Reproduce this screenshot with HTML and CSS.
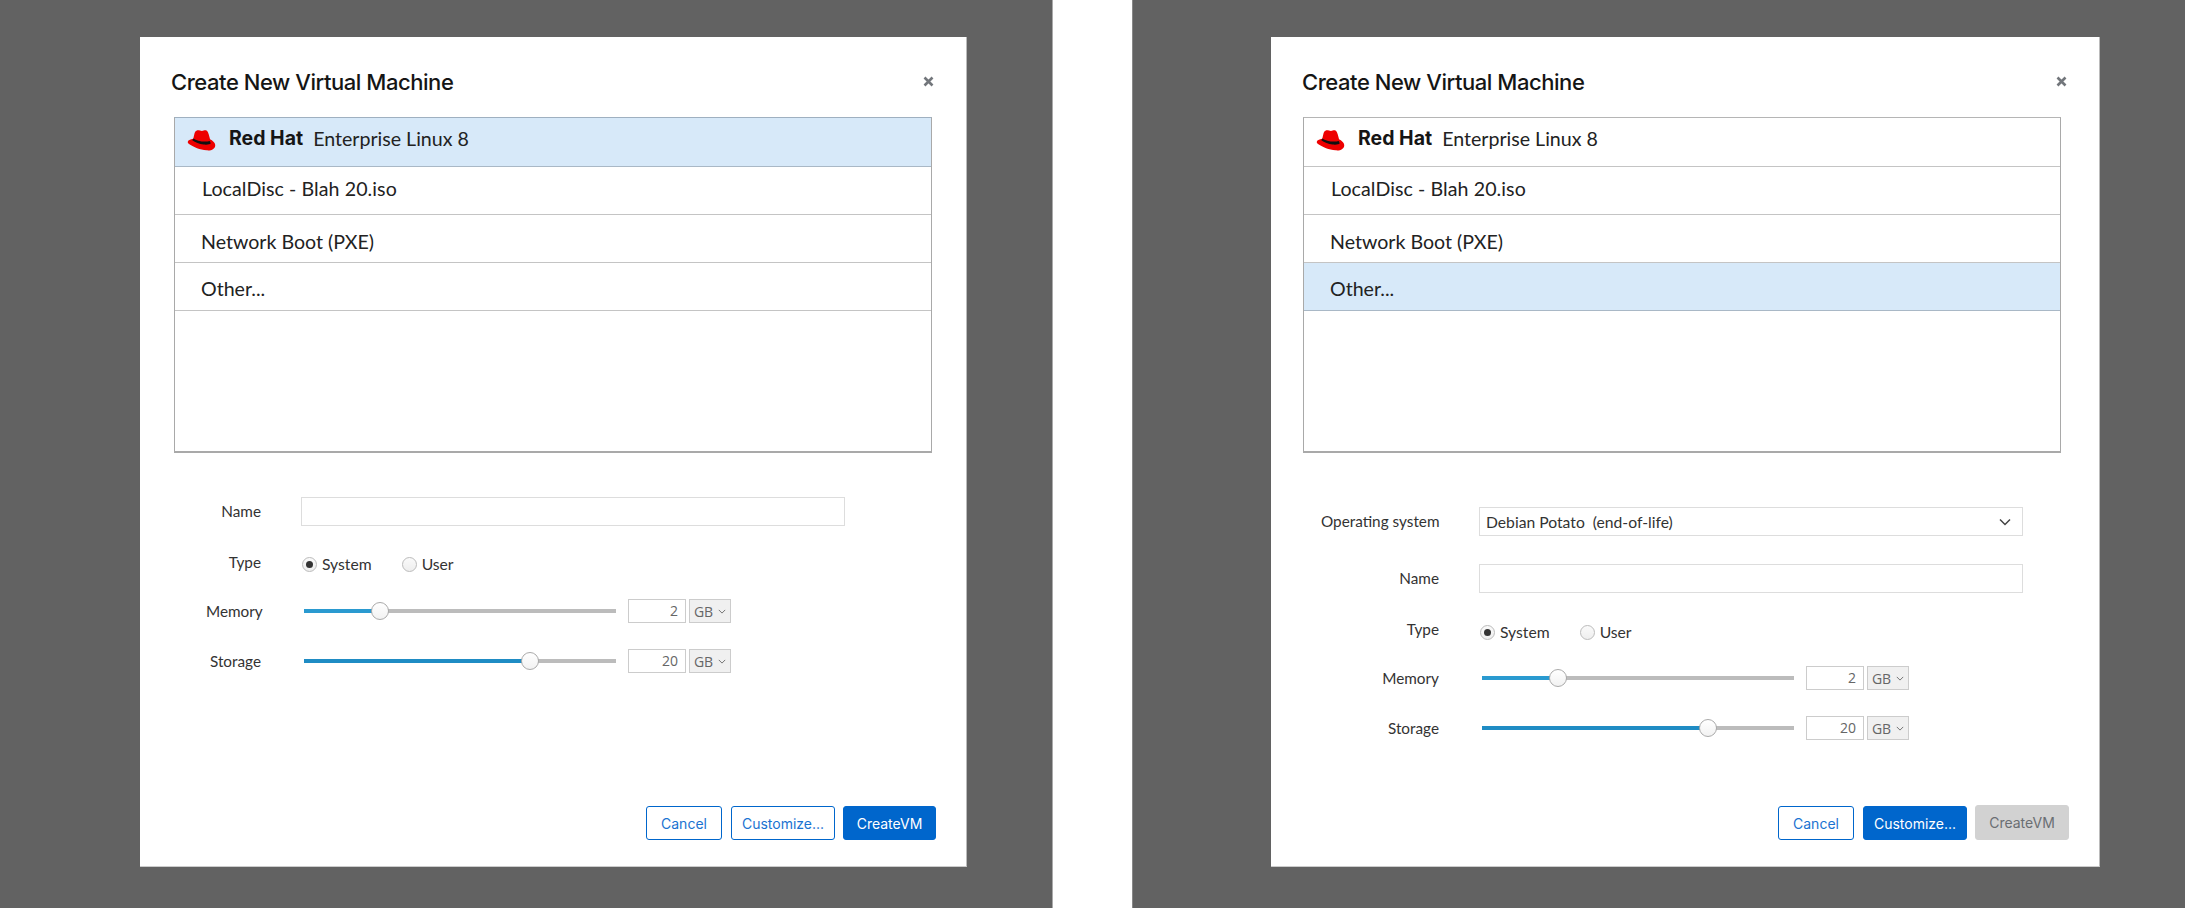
FILE: index.html
```html
<!DOCTYPE html>
<html lang="en">
<head>
    <meta charset="UTF-8">
    <meta name="viewport" content="width=device-width, initial-scale=1.0">
    <title>Create New Virtual Machine</title>
    <link rel="stylesheet" href="styles.css">
</head>
<body>
    <div class="page">
        <!-- Left: Red Hat selected, no operating system row -->
        <div class="backdrop backdrop-left">
            <div class="modal">
                <div class="modal-header">
                    <h2>Create New Virtual Machine</h2>
                    <svg class="close" viewBox="0 0 11 11"><path d="M1.500 1.500l8 8M9.500 1.500l-8 8"/></svg>
                </div>
                <div class="source-list">
                    <div class="source-row row-brand selected">
                        <svg class="hat" viewBox="0 0 85 65"><path fill="#e00" d="M27 2C33-1 38 3 44 3c4 0 8-3 12-2 5 1 7 7 9 13l4 15c7 4 16 10 16 18 0 11-12 18-27 16C38 61 18 53 5 44c-3-2-5-4-5-7 0-5 8-9 17-10l4-17c1-4 3-7 6-8z"/><path fill="#111" d="M17 26c11 7 33 13 51 8l3 7c-2 4-12 5-22 4-13-1-26-7-35-13z"/></svg>
                        <span class="brand">Red Hat</span>
                        <span>Enterprise Linux 8</span>
                    </div>
                    <div class="source-row row-local">LocalDisc - Blah 20.iso</div>
                    <div class="source-row row-net">Network Boot (PXE)</div>
                    <div class="source-row row-other">Other...</div>
                </div>
                <div class="vm-form form-short">
                    <div class="form-row row-name">
                        <label>Name</label>
                        <div class="text-input"></div>
                    </div>
                    <div class="form-row row-type">
                        <label>Type</label>
                        <div class="radios">
                            <span class="radio checked"></span><span class="radio-text">System</span>
                            <span class="radio"></span><span class="radio-text">User</span>
                        </div>
                    </div>
                    <div class="form-row row-memory">
                        <label>Memory</label>
                        <div class="slider"><div class="fill" style="width: 76px"></div><div class="thumb"></div></div>
                        <div class="amount">2</div>
                        <div class="unit">GB <svg viewBox="0 0 10 6"><path d="M1 1l4 4 4-4"/></svg></div>
                    </div>
                    <div class="form-row row-storage">
                        <label>Storage</label>
                        <div class="slider"><div class="fill" style="width: 226px"></div><div class="thumb"></div></div>
                        <div class="amount">20</div>
                        <div class="unit">GB <svg viewBox="0 0 10 6"><path d="M1 1l4 4 4-4"/></svg></div>
                    </div>
                </div>
                <div class="modal-footer">
                    <button class="btn btn-outline">Cancel</button>
                    <button class="btn btn-outline">Customize...</button>
                    <button class="btn btn-primary">CreateVM</button>
                </div>
            </div>
        </div>

        <!-- Right: Other selected, operating system row shown -->
        <div class="backdrop backdrop-right">
            <div class="modal">
                <div class="modal-header">
                    <h2>Create New Virtual Machine</h2>
                    <svg class="close" viewBox="0 0 11 11"><path d="M1.500 1.500l8 8M9.500 1.500l-8 8"/></svg>
                </div>
                <div class="source-list">
                    <div class="source-row row-brand">
                        <svg class="hat" viewBox="0 0 85 65"><path fill="#e00" d="M27 2C33-1 38 3 44 3c4 0 8-3 12-2 5 1 7 7 9 13l4 15c7 4 16 10 16 18 0 11-12 18-27 16C38 61 18 53 5 44c-3-2-5-4-5-7 0-5 8-9 17-10l4-17c1-4 3-7 6-8z"/><path fill="#111" d="M17 26c11 7 33 13 51 8l3 7c-2 4-12 5-22 4-13-1-26-7-35-13z"/></svg>
                        <span class="brand">Red Hat</span>
                        <span>Enterprise Linux 8</span>
                    </div>
                    <div class="source-row row-local">LocalDisc - Blah 20.iso</div>
                    <div class="source-row row-net">Network Boot (PXE)</div>
                    <div class="source-row row-other selected">Other...</div>
                </div>
                <div class="vm-form form-full">
                    <div class="form-row row-os">
                        <label>Operating system</label>
                        <div class="select">
                            <span>Debian Potato&nbsp; (end-of-life)</span>
                            <svg viewBox="0 0 12 8"><path d="M1 1.500l5 5 5-5"/></svg>
                        </div>
                    </div>
                    <div class="form-row row-name">
                        <label>Name</label>
                        <div class="text-input"></div>
                    </div>
                    <div class="form-row row-type">
                        <label>Type</label>
                        <div class="radios">
                            <span class="radio checked"></span><span class="radio-text">System</span>
                            <span class="radio"></span><span class="radio-text">User</span>
                        </div>
                    </div>
                    <div class="form-row row-memory">
                        <label>Memory</label>
                        <div class="slider"><div class="fill" style="width: 76px"></div><div class="thumb"></div></div>
                        <div class="amount">2</div>
                        <div class="unit">GB <svg viewBox="0 0 10 6"><path d="M1 1l4 4 4-4"/></svg></div>
                    </div>
                    <div class="form-row row-storage">
                        <label>Storage</label>
                        <div class="slider"><div class="fill" style="width: 226px"></div><div class="thumb"></div></div>
                        <div class="amount">20</div>
                        <div class="unit">GB <svg viewBox="0 0 10 6"><path d="M1 1l4 4 4-4"/></svg></div>
                    </div>
                </div>
                <div class="modal-footer">
                    <button class="btn btn-outline">Cancel</button>
                    <button class="btn btn-primary">Customize...</button>
                    <button class="btn btn-disabled">CreateVM</button>
                </div>
            </div>
        </div>
    </div>
</body>
</html>
```

FILE: styles.css
```css
html, body {
    margin: 0;
    padding: 0;
    height: 100%;
    background: #fff;
    overflow: hidden;
}

body {
    font-family: 'Lato', sans-serif;
    color: #151515;
}

.page {
    display: flex;
    justify-content: space-between;
    height: 908px;
}

.backdrop {
    width: 1053px;
    box-sizing: border-box;
    background: #626262;
}

.backdrop-left {
    padding: 37px 85px 41px 140px;
    border-right: 1px solid #aaa;
}

.backdrop-right {
    padding: 37px 85px 41px 138px;
    border-left: 1px solid #888;
}

.modal {
    height: 100%;
    box-sizing: border-box;
    background: #fff;
    border-right: 1px solid #bbb;
    border-bottom: 1px solid #ccc;
    display: flex;
    flex-direction: column;
}

.modal-header {
    display: flex;
    justify-content: space-between;
    align-items: center;
    height: 80px;
    padding: 0 32px 0 31px;
    box-sizing: border-box;
}

h2 {
    font-family: 'Inter', sans-serif;
    font-size: 22px;
    font-weight: 500;
    margin: 0;
    padding-top: 9px;
    letter-spacing: -0.45px;
}

.close {
    width: 11px;
    height: 11px;
    margin-top: 8px;
    fill: none;
    stroke: #72767b;
    stroke-width: 2.6;
}

.source-list {
    margin-left: 34px;
    width: 758px;
    height: 336px;
    box-sizing: border-box;
    border: 1px solid #a9a9a9;
    border-top-color: #9fb0c0;
    border-bottom-width: 2px;
    font-size: 19.6px;
    color: #222;
}

.backdrop-right .source-list {
    margin-left: 32px;
    border-top-color: #b5b5b5;
}

.source-row {
    height: 48px;
    box-sizing: border-box;
    border-bottom: 1px solid #c4c4c4;
    display: flex;
    align-items: center;
    padding-left: 26px;
}

.source-row.selected {
    background: #d7e9f9;
    border-bottom-color: #a9b8c6;
}

.row-brand {
    height: 49px;
    padding-bottom: 8px;
}

.row-local {
    padding-left: 27px;
    padding-bottom: 4px;
    letter-spacing: 0.08px;
}

.row-net {
    padding-top: 6px;
}

.row-other {
    padding-top: 3px;
}

.hat {
    width: 29px;
    height: 21px;
    margin-left: -14px;
    margin-top: 4px;
    margin-right: 13px;
}

.brand {
    font-family: 'Inter', sans-serif;
    font-weight: 700;
    font-size: 19.5px;
    color: #151515;
    margin-right: 10px;
}

.vm-form {
    font-size: 15.3px;
    color: #333;
}

.form-short {
    padding: 44px 0 0 66px;
}

.form-full {
    padding: 54px 0 0 50px;
}

.form-row {
    display: flex;
    align-items: center;
}

.form-row label {
    width: 55px;
    margin-right: 40px;
    text-align: right;
    white-space: nowrap;
    flex: none;
}

.form-full .form-row label {
    width: 118px;
}

.row-name label,
.row-os label {
    padding-bottom: 2px;
}

.text-input,
.select {
    height: 29px;
    width: 544px;
    box-sizing: border-box;
    border: 1px solid #ddd;
    background: #fff;
}

.select {
    display: flex;
    justify-content: space-between;
    align-items: center;
    padding: 0 11px 0 6px;
    font-size: 15.7px;
    color: #333;
}

.select svg {
    width: 12px;
    height: 8px;
    fill: none;
    stroke: #444;
    stroke-width: 1.5;
}

.row-name {
    height: 29px;
}

.form-full .row-name {
    margin-top: 28px;
}

.row-type {
    height: 20px;
    margin-top: 28px;
}

.form-full .row-type {
    margin-top: 29px;
}

.row-type label {
    margin-top: -5px;
}

.form-full .row-type label {
    margin-top: -6px;
}

.radios {
    display: flex;
    align-items: center;
    font-size: 15.7px;
}

.radio {
    width: 15px;
    height: 15px;
    box-sizing: border-box;
    border: 1px solid #bbb;
    border-radius: 50%;
    background: linear-gradient(#fafafa, #eee);
    margin-left: 1px;
    position: relative;
}

.radio.checked::after {
    content: "";
    position: absolute;
    left: 3px;
    top: 3px;
    width: 7px;
    height: 7px;
    border-radius: 50%;
    background: #333;
}

.radio-text {
    margin-left: 5px;
    margin-right: 29px;
}

.row-memory,
.row-storage {
    height: 24px;
}

.row-memory {
    margin-top: 25px;
}

.form-full .row-memory {
    margin-top: 24px;
}

.row-storage {
    margin-top: 26px;
}

.slider {
    width: 312px;
    height: 4px;
    margin-left: 3px;
    background: #bcbcbc;
    display: flex;
    align-items: center;
}

.fill {
    height: 4px;
    background: #2a9ad0;
}

.row-storage .fill {
    background: #1f8cc4;
}

.thumb {
    width: 18px;
    height: 18px;
    box-sizing: border-box;
    margin-left: -9px;
    border: 1px solid #aaa;
    border-radius: 50%;
    background: linear-gradient(#fff, #f2f2f2);
    flex: none;
}

.amount {
    width: 58px;
    height: 24px;
    box-sizing: border-box;
    margin-left: 12px;
    border: 1px solid #ccc;
    text-align: right;
    padding-right: 7px;
    line-height: 22px;
    font-family: 'Open Sans', sans-serif;
    font-size: 14px;
    color: #666;
}

.unit {
    width: 42px;
    height: 24px;
    box-sizing: border-box;
    margin-left: 3px;
    border: 1px solid #ccc;
    background: #f0f0f0;
    display: flex;
    align-items: center;
    justify-content: center;
    gap: 5px;
    font-family: 'Open Sans', sans-serif;
    font-size: 14px;
    color: #666;
}

.unit svg {
    width: 8px;
    height: 5px;
    fill: none;
    stroke: #555;
    stroke-width: 1;
}

.modal-footer {
    margin-top: auto;
    padding: 0 30px 26px 0;
    display: flex;
    justify-content: flex-end;
    gap: 8px;
}

.btn {
    height: 34px;
    padding: 0;
    border-radius: 3px;
    font-family: 'Inter', sans-serif;
    font-size: 14px;
    box-sizing: border-box;
}

.btn-outline {
    background: #fff;
    border: 1px solid #0066cc;
    color: #1a73d1;
}

.btn-primary {
    background: #0066cc;
    border: 1px solid #0066cc;
    color: #fff;
}

.btn-disabled {
    height: 35px;
    margin-top: -1px;
    background: #d2d2d2;
    border: 1px solid #d2d2d2;
    color: #6a6e73;
}

.btn:nth-child(1) {
    width: 76px;
    margin-right: 1px;
}

.btn:nth-child(2) {
    width: 104px;
}

.btn:nth-child(3) {
    width: 93px;
}

.backdrop-right .btn:nth-child(3) {
    width: 94px;
}
```
